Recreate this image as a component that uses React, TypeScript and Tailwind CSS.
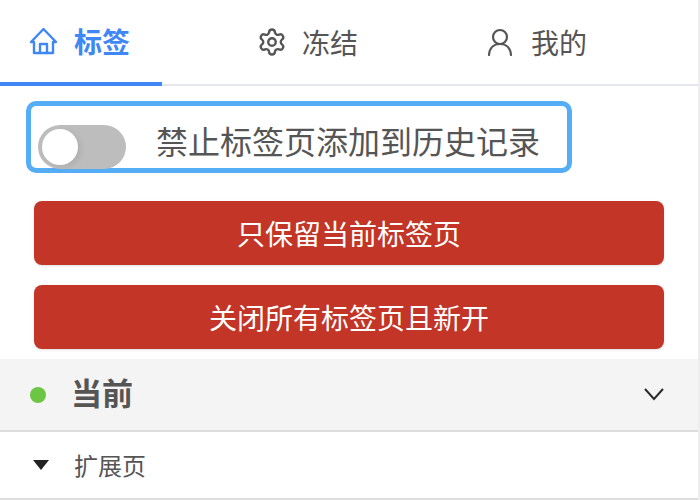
import { Settings } from "lucide-react";

const font = "font-['Noto_Sans_CJK_SC','Liberation_Sans',sans-serif]";

function HomeIcon() {
  return (
    <svg width="30" height="28" viewBox="0 0 30 28" fill="none" stroke="currentColor" strokeWidth="2.4" strokeLinejoin="round" strokeLinecap="round">
      <path d="M2 15 L14.5 2 L27 15 H24 V26 H5 V15 Z" />
      <path d="M11 26 V17 H18 V26" />
    </svg>
  );
}

function UserIcon() {
  return (
    <svg width="26" height="28" viewBox="0 0 26 28" fill="none" stroke="currentColor" strokeWidth="2.2" strokeLinecap="round">
      <circle cx="13" cy="9" r="7" />
      <path d="M2 27 C2.5 20 7 16 13 16 C19 16 23.5 20 24 27" />
    </svg>
  );
}

function Chevron() {
  return (
    <svg width="20" height="14" viewBox="0 0 20 14" fill="none" stroke="#2b2b2b" strokeWidth="2">
      <path d="M1 2 L10 12 L19 2" />
    </svg>
  );
}

export default function App() {
  return (
    <div className={`w-[700px] h-[500px] overflow-hidden bg-white border-r-2 border-[#eeeeee] ${font}`}>
      {/* Tabs */}
      <div className="flex h-[86px] border-b-2 border-[#e4e7ed] text-[28px] text-[#555555]">
        <div className="flex w-[162px] h-[86px] items-center gap-[15px] pl-[29px] border-b-4 border-[#3f87f5] text-[#3f87f5] font-semibold">
          <HomeIcon />
          <span>标签</span>
        </div>
        <div className="flex items-center gap-[15px] pl-[95px]">
          <Settings size={30} strokeWidth={1.9} />
          <span>冻结</span>
        </div>
        <div className="flex items-center gap-[18px] pl-[129px]">
          <UserIcon />
          <span>我的</span>
        </div>
      </div>

      {/* Toggle */}
      <div className="mt-[15px] ml-[26px] w-[546px] h-[72px] rounded-[10px] border-[5px] border-[#55aef5] flex items-end">
        <div className="ml-[7px] mb-[-1px] w-[88px] h-[44px] rounded-full bg-[#bdbdbd] p-[4px]">
          <div className="w-[36px] h-[36px] rounded-full bg-white shadow-[3px_2px_6px_rgba(0,0,0,0.08)]"></div>
        </div>
        <span className="ml-[30px] mb-[4px] text-[32px] leading-[48px] text-[#555555]">禁止标签页添加到历史记录</span>
      </div>

      {/* Buttons */}
      <div className="mt-[28px] ml-[34px] w-[630px] flex flex-col gap-[20px]">
        <div className="h-[64px] rounded-[8px] bg-[#c23527] shadow-sm flex items-center justify-center text-[28px] text-white">只保留当前标签页</div>
        <div className="h-[64px] rounded-[8px] bg-[#c23527] shadow-sm flex items-center justify-center text-[28px] text-white">关闭所有标签页且新开</div>
      </div>

      {/* Section */}
      <div className="mt-[10px] h-[73px] bg-[#f4f4f4] border-b-2 border-[#dddddd] flex items-center pl-[30px] pr-[34px]">
        <div className="w-[16px] h-[16px] rounded-full bg-[#6cc644]"></div>
        <span className="ml-[25px] mb-[4px] text-[31px] font-bold text-[#555555]">当前</span>
        <div className="ml-auto mb-[2px]">
          <Chevron />
        </div>
      </div>

      {/* Item */}
      <div className="h-[68px] border-b-2 border-[#dddddd] flex items-center pl-[33px]">
        <div className="w-0 h-0 border-x-[8.5px] border-x-transparent border-t-[10px] border-t-[#222222]"></div>
        <span className="ml-[25px] text-[24px] text-[#555555]">扩展页</span>
      </div>
    </div>
  );
}
